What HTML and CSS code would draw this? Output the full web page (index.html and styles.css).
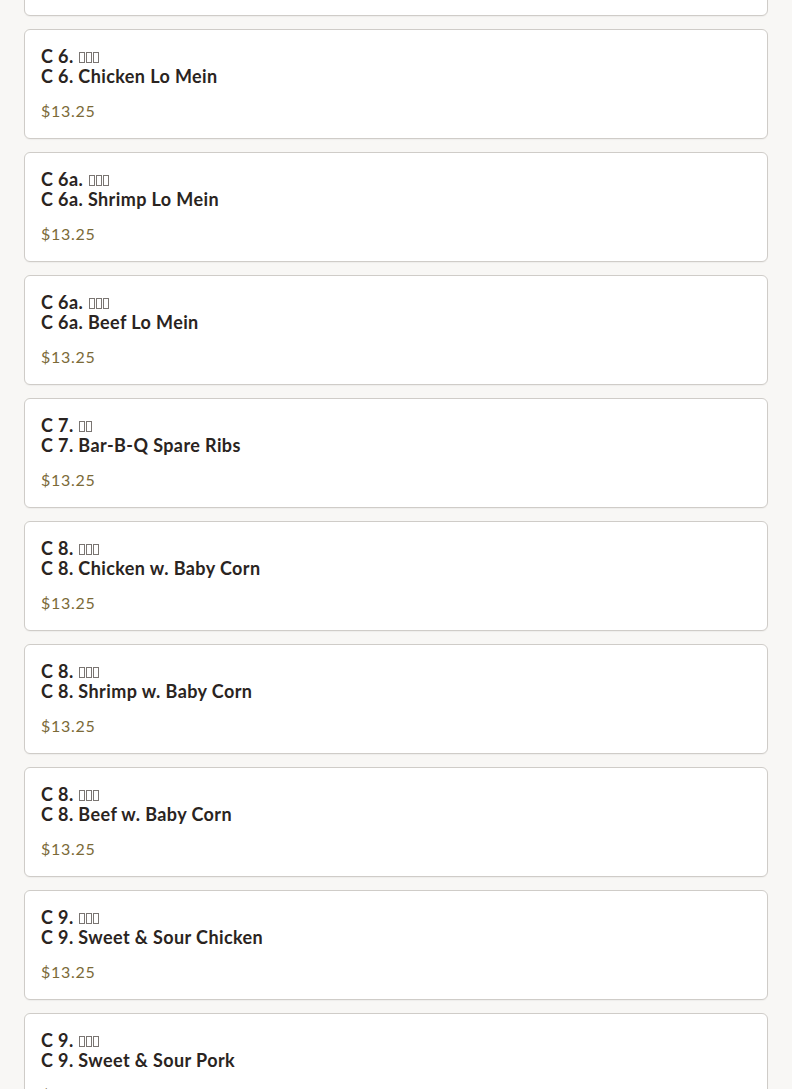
FILE: index.html
```html
<!DOCTYPE html>
<html lang="en">
<head>
<meta charset="utf-8">
<title>Menu</title>
<link rel="stylesheet" href="styles.css">
</head>
<body>
<main class="menu-list">
  <div class="item-card item-card--stub" aria-hidden="true"></div>
  <div class="item-card">
    <div class="item-name">C 6. <span class="tofu-group"><span class="tofu"></span><span class="tofu"></span><span class="tofu"></span></span></div>
    <div class="item-name">C 6. Chicken Lo Mein</div>
    <div class="item-price">$13.25</div>
  </div>
  <div class="item-card">
    <div class="item-name">C 6a. <span class="tofu-group"><span class="tofu"></span><span class="tofu"></span><span class="tofu"></span></span></div>
    <div class="item-name">C 6a. Shrimp Lo Mein</div>
    <div class="item-price">$13.25</div>
  </div>
  <div class="item-card">
    <div class="item-name">C 6a. <span class="tofu-group"><span class="tofu"></span><span class="tofu"></span><span class="tofu"></span></span></div>
    <div class="item-name">C 6a. Beef Lo Mein</div>
    <div class="item-price">$13.25</div>
  </div>
  <div class="item-card">
    <div class="item-name">C 7. <span class="tofu-group"><span class="tofu"></span><span class="tofu"></span></span></div>
    <div class="item-name">C 7. Bar-B-Q Spare Ribs</div>
    <div class="item-price">$13.25</div>
  </div>
  <div class="item-card">
    <div class="item-name">C 8. <span class="tofu-group"><span class="tofu"></span><span class="tofu"></span><span class="tofu"></span></span></div>
    <div class="item-name">C 8. Chicken w. Baby Corn</div>
    <div class="item-price">$13.25</div>
  </div>
  <div class="item-card">
    <div class="item-name">C 8. <span class="tofu-group"><span class="tofu"></span><span class="tofu"></span><span class="tofu"></span></span></div>
    <div class="item-name">C 8. Shrimp w. Baby Corn</div>
    <div class="item-price">$13.25</div>
  </div>
  <div class="item-card">
    <div class="item-name">C 8. <span class="tofu-group"><span class="tofu"></span><span class="tofu"></span><span class="tofu"></span></span></div>
    <div class="item-name">C 8. Beef w. Baby Corn</div>
    <div class="item-price">$13.25</div>
  </div>
  <div class="item-card">
    <div class="item-name">C 9. <span class="tofu-group"><span class="tofu"></span><span class="tofu"></span><span class="tofu"></span></span></div>
    <div class="item-name">C 9. Sweet &amp; Sour Chicken</div>
    <div class="item-price">$13.25</div>
  </div>
  <div class="item-card">
    <div class="item-name">C 9. <span class="tofu-group"><span class="tofu"></span><span class="tofu"></span><span class="tofu"></span></span></div>
    <div class="item-name">C 9. Sweet &amp; Sour Pork</div>
    <div class="item-price">$13.25</div>
  </div>
</main>
</body>
</html>
```

FILE: styles.css
```css
html, body {
  margin: 0;
  padding: 0;
  background: #f8f7f5;
  overflow: hidden;
}

body {
  font-family: "Lato", "Noto Sans", sans-serif;
  color: #2a2421;
}

.menu-list {
  display: flex;
  flex-direction: column;
  gap: 13px;
  padding: 0 24px;
  margin-top: -94px;
}

.item-card {
  background: #ffffff;
  border: 1px solid #cfccc8;
  border-radius: 6px;
  padding: 16px 16px 17px;
  height: 110px;
  box-sizing: border-box;
  display: flex;
  flex-direction: column;
  flex-shrink: 0;
  box-shadow: 0 1px 1px rgba(0,0,0,0.04);
}

.item-name {
  font-size: 18px;
  font-weight: 700;
  line-height: 20px;
  letter-spacing: 0.4px;
  white-space: nowrap;
}

.tofu-group {
  display: inline-flex;
  gap: 1px;
  margin-left: 1px;
  vertical-align: 0;
}

.tofu {
  display: inline-block;
  width: 4px;
  height: 9px;
  border: 1px solid #7a7572;
}

.item-price {
  margin-top: 15px;
  font-size: 16px;
  line-height: 20px;
  letter-spacing: 0.7px;
  color: #7b6a38;
}
```
